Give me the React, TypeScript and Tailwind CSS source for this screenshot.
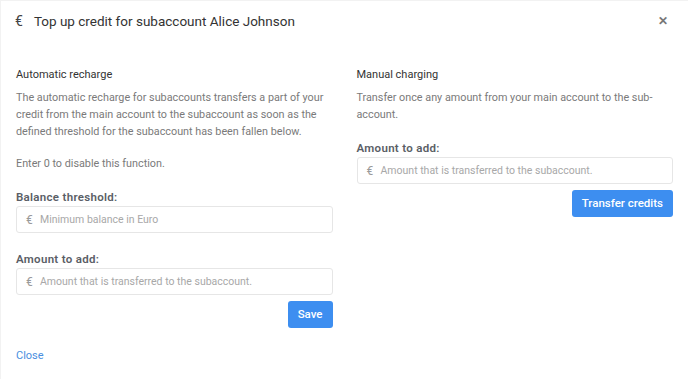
import React from "react";

function EuroInput({ placeholder }: { placeholder: string }) {
  return (
    <div className="flex h-[27px] items-center rounded-[3px] border border-[#e6e6e6] bg-white">
      <span className="w-[23px] pl-[9px] text-[12px] text-[#9a9a9a]">€</span>
      <span className="text-[10.5px] text-[#a8a8a8]">{placeholder}</span>
    </div>
  );
}

function Label({ children, className }: { children: React.ReactNode; className: string }) {
  return (
    <div className={`text-[11.5px] font-semibold tracking-[0.3px] leading-[17px] text-[#5a5e66] ${className}`}>
      {children}
    </div>
  );
}

export default function App() {
  return (
    <div
      className="relative h-[379px] w-[688px] overflow-hidden border-l border-t border-[#f2f2f2] bg-white text-[#333]"
      style={{ fontFamily: "Roboto, 'Liberation Sans', sans-serif" }}
    >
      <div className="flex h-[40px] items-center justify-between pl-[14px] pr-[20px]">
        <div className="flex items-center">
          <span className="mr-[11px] text-[14px] text-[#444]">€</span>
          <span className="text-[13.5px] text-[#333]">Top up credit for subaccount Alice Johnson</span>
        </div>
        <span className="text-[12px] font-bold leading-none text-[#777]">✕</span>
      </div>

      <div className="mt-[25px] grid grid-cols-2 gap-[24px] px-[15px]">
        <div>
          <div className="text-[11px] leading-[17px] text-[#333]">Automatic recharge</div>
          <p className="mt-[6px] text-[10.8px] leading-[17px] text-[#7a7a7a]">
            The automatic recharge for subaccounts transfers a part of your credit from the main account
            to the subaccount as soon as the defined threshold for the subaccount has been fallen below.
          </p>
          <p className="mt-[15px] text-[10.8px] leading-[17px] text-[#7a7a7a]">Enter 0 to disable this function.</p>
          <Label className="mt-[17px]">Balance threshold:</Label>
          <div className="mt-0">
            <EuroInput placeholder="Minimum balance in Euro" />
          </div>
          <Label className="mt-[18px]">Amount to add:</Label>
          <div className="mt-0">
            <EuroInput placeholder="Amount that is transferred to the subaccount." />
          </div>
          <div className="mt-[6px] flex justify-end">
            <button className="h-[27px] rounded-[3px] bg-[#3d8ef0] px-[10px] text-[11.5px] font-medium text-white">
              Save
            </button>
          </div>
        </div>
        <div>
          <div className="text-[11px] leading-[17px] text-[#333]">Manual charging</div>
          <p className="mt-[6px] text-[10.8px] leading-[17px] text-[#7a7a7a]">
            Transfer once any amount from your main account to the sub-account.
          </p>
          <Label className="mt-[17px]">Amount to add:</Label>
          <div className="mt-0">
            <EuroInput placeholder="Amount that is transferred to the subaccount." />
          </div>
          <div className="mt-[6px] flex justify-end">
            <button className="h-[27px] rounded-[3px] bg-[#3d8ef0] px-[10px] text-[11.5px] font-medium text-white">
              Transfer credits
            </button>
          </div>
        </div>
      </div>

      <div className="mt-[19px] px-[15px] text-[11px] leading-[17px] text-[#4a8fe0]">Close</div>
    </div>
  );
}
